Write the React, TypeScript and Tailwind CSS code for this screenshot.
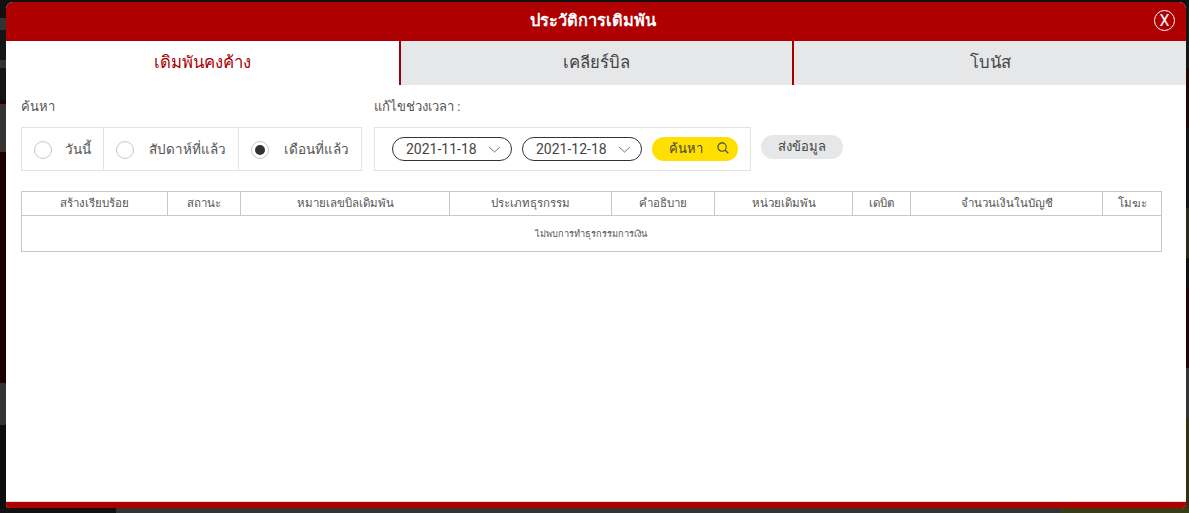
const font = "font-['Roboto','Noto_Sans','Liberation_Sans',sans-serif]";

const columns = [
  { label: "สร้างเรียบร้อย", width: "w-[146px]" },
  { label: "สถานะ", width: "w-[73px]" },
  { label: "หมายเลขบิลเดิมพัน", width: "w-[209px]" },
  { label: "ประเภทธุรกรรม", width: "w-[162px]" },
  { label: "คำอธิบาย", width: "w-[103px]" },
  { label: "หน่วยเดิมพัน", width: "w-[138px]" },
  { label: "เดบิต", width: "w-[58px]" },
  { label: "จำนวนเงินในบัญชี", width: "w-[192px]" },
  { label: "โมฆะ", width: "w-[59px]" },
];

function Radio({ label, checked, className }: { label: string; checked?: boolean; className: string }) {
  return (
    <div className={`flex items-center h-full ${className}`}>
      <span className="mt-[2px] w-[18px] h-[18px] rounded-full border border-[#c8c8c8] flex items-center justify-center shrink-0">
        {checked && <span className="w-[10px] h-[10px] rounded-full bg-[#333]" />}
      </span>
      <span className="ml-auto text-[13.5px] text-[#555]">{label}</span>
    </div>
  );
}

function DatePill({ value }: { value: string }) {
  return (
    <div className="w-[120px] h-[24px] rounded-full border border-[#333] flex items-center pl-[13px] pr-[10px] text-[14px] text-[#444]">
      <span>{value}</span>
      <svg className="ml-auto" width="13" height="7" viewBox="0 0 13 7" fill="none" stroke="#777" strokeWidth="1">
        <path d="M1 1l5.5 5L12 1" />
      </svg>
    </div>
  );
}

export default function App() {
  return (
    <div className={`w-[1189px] h-[513px] overflow-hidden bg-[#141212] flex flex-col ${font}`}>
      <div className="h-[2px] shrink-0 bg-[#111]" />
      <div className="flex h-[506px] shrink-0">
        {/* page behind the dialog, left edge */}
        <div className="w-[6px] shrink-0 flex flex-col">
          <div className="h-[16px] bg-[#111]" />
          <div className="h-[12px] bg-[#333]" />
          <div className="h-[30px] bg-[#151515]" />
          <div className="h-[8px] bg-[#333]" />
          <div className="h-[32px] bg-[#151515]" />
          <div className="h-[4px] bg-[#200000]" />
          <div className="h-[48px] bg-[#333]" />
          <div className="h-[198px] bg-[#1c0000]" />
          <div className="h-[33px] bg-[#1c0000]" />
          <div className="h-[42px] bg-[#333]" />
          <div className="flex-1 bg-[#0d0d0d]" />
        </div>

        <div className="w-[1180px] shrink-0 rounded-t-[7px] rounded-b-[4px] overflow-hidden bg-white flex flex-col">
          {/* header */}
          <div className="h-[39px] shrink-0 bg-[#ae0000] flex items-center justify-center relative pr-[6px]">
            <h1 className="text-[16.4px] font-bold text-white">ประวัติการเดิมพัน</h1>
            <div className="absolute right-[11px] top-[8px] w-[21px] h-[21px] rounded-full border border-white text-white flex items-center justify-center text-[16px]">
              X
            </div>
          </div>

          {/* tabs */}
          <div className="h-[44px] shrink-0 flex text-[16.7px]">
            <div className="w-[395px] flex items-center justify-center bg-white text-[#a80000] border-r-2 border-[#a00000]">
              เดิมพันคงค้าง
            </div>
            <div className="w-[393px] flex items-center justify-center bg-[#e6e7e8] text-[#444] border-r-2 border-[#a00000]">
              เคลียร์บิล
            </div>
            <div className="flex-1 flex items-center justify-center bg-[#e6e7e8] text-[#444]">โบนัส</div>
          </div>

          {/* filters */}
          <div className="flex-1 px-[15px]">
            <div className="flex mt-[12px]">
              <div className="w-[341px]">
                <p className="text-[13px] leading-[20px] text-[#555]">ค้นหา</p>
                <div className="mt-[10px] h-[44px] border border-[#e3e3e3] flex">
                  <Radio label="วันนี้" className="w-[82px] pl-[12px] pr-[12px] border-r border-[#e3e3e3]" />
                  <Radio label="สัปดาห์ที่แล้ว" className="w-[135px] pl-[12px] pr-[12px] border-r border-[#e3e3e3]" />
                  <Radio label="เดือนที่แล้ว" checked className="flex-1 pl-[12px] pr-[12px]" />
                </div>
              </div>
              <div className="ml-[12px]">
                <p className="text-[13px] leading-[20px] text-[#555]">แก้ไขช่วงเวลา :</p>
                <div className="flex items-start">
                  <div className="mt-[10px] w-[377px] h-[44px] border border-[#e3e3e3] flex items-center pl-[17px] gap-[10px]">
                    <DatePill value="2021-11-18" />
                    <DatePill value="2021-12-18" />
                    <div className="w-[86px] h-[24px] rounded-full bg-[#ffdf00] flex items-center pl-[17px] pr-[9px] text-[13px] text-[#444]">
                      <span>ค้นหา</span>
                      <svg className="ml-auto mb-[2px]" width="12" height="12" viewBox="0 0 13 13" fill="none" stroke="#444" strokeWidth="1.2">
                        <circle cx="5.5" cy="5.5" r="4.5" />
                        <path d="M8.8 8.8l3.4 3.4" />
                      </svg>
                    </div>
                  </div>
                  <div className="ml-[10px] mt-[18px] w-[82px] h-[24px] rounded-full bg-[#e6e7e8] flex items-center justify-center text-[13px] text-[#444]">
                    ส่งข้อมูล
                  </div>
                </div>
              </div>
            </div>

            {/* table */}
            <table className="mt-[20px] w-[1141px] table-fixed border-collapse text-[#555]">
              <thead>
                <tr className="h-[24px] text-[11.5px]">
                  {columns.map((c) => (
                    <th key={c.label} className={`${c.width} border border-[#c8c8c8] font-normal`}>
                      {c.label}
                    </th>
                  ))}
                </tr>
              </thead>
              <tbody>
                <tr className="h-[36px]">
                  <td colSpan={9} className="border border-[#c8c8c8] text-center text-[9.2px] pt-[1px] pr-[2px]">
                    ไม่พบการทำธุรกรรมการเงิน
                  </td>
                </tr>
              </tbody>
            </table>
          </div>

          <div className="h-[7px] shrink-0 bg-[#ae0000] border-t border-[#ddd]" />
        </div>

        {/* page behind the dialog, right edge */}
        <div className="flex-1 flex flex-col">
          <div className="h-[66px] bg-[#151515]" />
          <div className="h-[60px] bg-[#200505]" />
          <div className="h-[80px] bg-[#141414]" />
          <div className="h-[50px] bg-[#2a2a18]" />
          <div className="h-[30px] bg-[#101010]" />
          <div className="h-[80px] bg-[#250005]" />
          <div className="h-[50px] bg-[#333]" />
          <div className="flex-1 bg-[#33310f]" />
        </div>
      </div>

      {/* page behind the dialog, bottom edge */}
      <div className="flex-1 flex">
        <div className="w-[116px] bg-[#111]" />
        <div className="w-[944px] bg-[#333]" />
        <div className="flex-1 bg-[#3a3a14]" />
      </div>
    </div>
  );
}
